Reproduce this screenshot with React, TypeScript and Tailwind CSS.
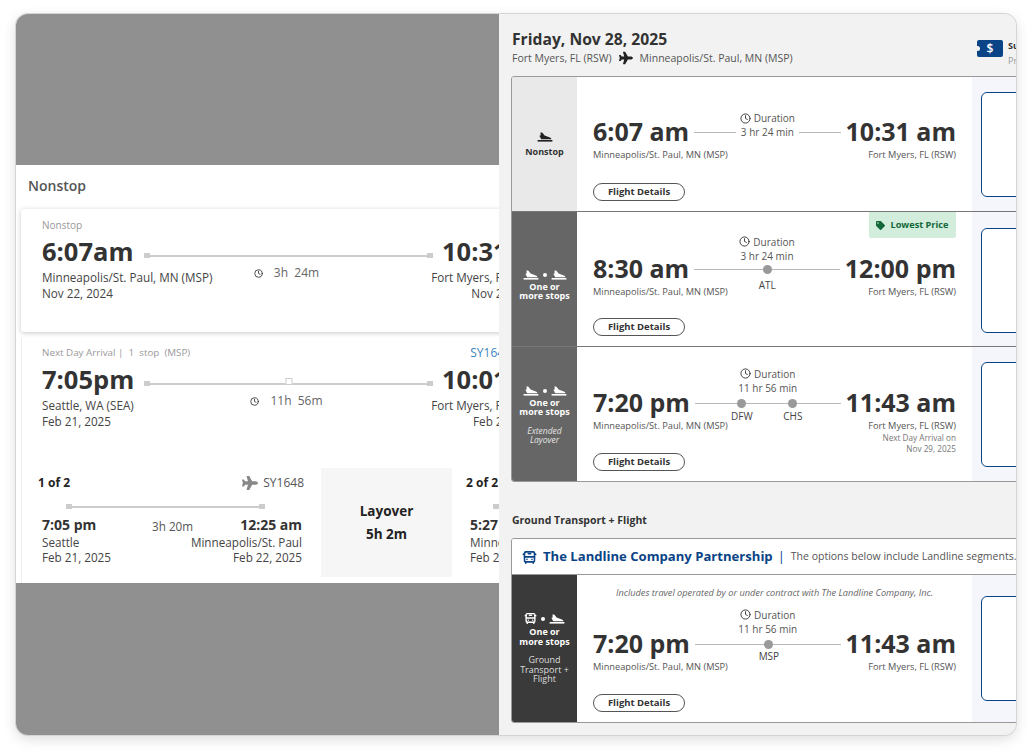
import { BusFront, Clock } from "lucide-react";
import { FaTag, FaPlane } from "react-icons/fa";

const navy = "#0a4386";

type Stop = { code: string; x: number; gap: number };

function LandIcon({ className }: { className?: string }) {
  return (
    <svg viewBox="0 0 16 10" fill="currentColor" className={className}>
      <path d="M3.6 0.3 L5.4 0.8 L7.6 3.6 L12.2 5.2 C14 5.9 14.6 6.6 14.2 7.2 L4.2 7.2 L2.4 3.8 L3.6 3.6 Z" />
      <rect x="0.6" y="8" width="14.8" height="1.6" />
    </svg>
  );
}

function StopIcons({ bus }: { bus?: boolean }) {
  return (
    <div className="flex items-center justify-center gap-[4px] text-white">
      {bus ? <BusFront className="h-[13px] w-[13px]" strokeWidth={2.5} /> : <LandIcon className="h-[10px] w-[16px]" />}
      <span className="h-[4px] w-[4px] rounded-full bg-white" />
      <LandIcon className="h-[10px] w-[16px]" />
    </div>
  );
}

function Route({ stops }: { stops: Stop[] }) {
  return (
    <div className="relative mx-[5px] h-[1px] flex-1 bg-[#b8b8b8]">
      {stops.map((s) => (
        <div
          key={s.code}
          className="absolute top-[-4px] flex w-[40px] flex-col items-center"
          style={{ left: s.x - 20 }}
        >
          <span className="h-[9px] w-[9px] shrink-0 rounded-full bg-[#999999]" />
          <span className="text-[10px] font-normal leading-[12px] text-[#444444]" style={{ marginTop: s.gap }}>
            {s.code}
          </span>
        </div>
      ))}
    </div>
  );
}

function Row({
  top,
  from,
  to,
  duration,
  stops = [],
  nextDay,
  note,
  lowest,
  durationClass = "bottom-[9px]",
  className = "",
  children,
}: {
  top: number;
  from: string;
  to: string;
  duration: string;
  stops?: Stop[];
  nextDay?: boolean;
  note?: boolean;
  lowest?: boolean;
  durationClass?: string;
  className?: string;
  children: React.ReactNode;
}) {
  return (
    <div className={`flex ${className}`}>
      {children}
      <div className="relative flex w-[395px] shrink-0 flex-col bg-white px-[16px] pb-[10px]" style={{ paddingTop: top }}>
        {note && (
          <div className="absolute left-0 right-0 top-[11px] text-center text-[9.2px] italic leading-[14px] text-[#666666]">
            Includes travel operated by or under contract with The Landline Company, Inc.
          </div>
        )}
        {lowest && (
          <div className="absolute right-[16px] top-0 flex h-[26px] w-[87px] items-center justify-center gap-[5px] rounded-b-[2px] bg-[#d3eddc] text-[9.2px] font-bold text-[#12683a]">
            <FaTag className="h-[9px] w-[9px]" />
            Lowest Price
          </div>
        )}
        <div className="flex h-[30px] items-center text-[25px] font-bold leading-[30px] text-[#333333]">
          <span className="whitespace-nowrap pb-[2px]">{from}</span>
          {stops.length > 0 ? (
            <div className="relative flex flex-1 items-center">
              <div className={`absolute left-0 right-0 flex flex-col items-center text-[10px] font-normal leading-[14px] text-[#555555] ${durationClass}`}>
                <div className="flex items-center gap-[3px]">
                  <Clock className="h-[11px] w-[11px] text-[#333333]" strokeWidth={2} />
                  <span>Duration</span>
                </div>
                <span>{duration}</span>
              </div>
              <Route stops={stops} />
            </div>
          ) : (
            <div className="relative mx-[5px] flex flex-1 items-center gap-[5px]">
              <div className="h-[1px] flex-1 bg-[#b8b8b8]" />
              <span className="text-[10px] font-normal leading-[14px] text-[#555555]">{duration}</span>
              <div className="h-[1px] flex-1 bg-[#b8b8b8]" />
              <div className="absolute bottom-full left-0 right-0 flex items-center justify-center gap-[3px] text-[10px] font-normal leading-[14px] text-[#555555]">
                <Clock className="h-[11px] w-[11px] text-[#333333]" strokeWidth={2} />
                Duration
              </div>
            </div>
          )}
          <span className="whitespace-nowrap pb-[2px]">{to}</span>
        </div>
        <div className="relative mt-[1px] flex justify-between text-[9.25px] leading-[14px] text-[#555555]">
          <span>Minneapolis/St. Paul, MN (MSP)</span>
          <span>Fort Myers, FL (RSW)</span>
          {nextDay && (
            <div className="absolute right-0 top-[14px] text-right text-[8.2px] leading-[10.5px] text-[#777777]">
              Next Day Arrival on
              <br />
              Nov 29, 2025
            </div>
          )}
        </div>
        <button className="mt-auto flex h-[18px] w-[92px] items-center justify-center rounded-full border border-[#555555] bg-white text-[9.5px] font-bold text-[#333333]">
          Flight Details
        </button>
      </div>
      <div className={`flex flex-1 items-center bg-[#f4f6fb] pl-[9px] ${lowest ? "pt-[3px]" : ""}`}>
        <div className="h-[105px] w-[80px] rounded-[6px] border-[1.5px] bg-white" style={{ borderColor: navy }} />
      </div>
    </div>
  );
}

function Side({ tone, children }: { tone: string; children: React.ReactNode }) {
  return (
    <div className={`flex w-[65px] shrink-0 flex-col items-center justify-center text-center ${tone}`}>{children}</div>
  );
}

function Rail() {
  return (
    <div className="flex items-center">
      <span className="h-[5px] w-[6px] bg-[#cccccc]" />
      <div className="h-[2px] flex-1 bg-[#cccccc]" />
      <span className="h-[5px] w-[6px] bg-[#cccccc]" />
    </div>
  );
}

function FareTimes({ time, mid, arrive, midStop }: { time: string; mid: string; arrive: string; midStop?: boolean }) {
  return (
    <div className="flex pt-[4px]">
      <div className="w-[102px] shrink-0 text-[25.5px] font-bold leading-[30px] text-[#333333]">{time}</div>
      <div className="relative mt-[17px] flex-1">
        <div className="relative">
          <Rail />
          {midStop && (
            <span className="absolute left-1/2 top-[-3px] h-[7px] w-[7px] -translate-x-1/2 border border-[#cccccc] bg-white" />
          )}
        </div>
        <div className="mt-[7px] flex items-center justify-center gap-[11px] pr-[4px] text-[12px] leading-[16px] text-[#666666]">
          <Clock className="h-[9px] w-[9px] text-[#444444]" strokeWidth={2.5} />
          <span className="whitespace-pre">{mid}</span>
        </div>
      </div>
      <div className="ml-[9px] w-[100px] shrink-0 whitespace-nowrap text-[25.5px] font-bold leading-[30px] text-[#333333]">{arrive}</div>
    </div>
  );
}

function FarePlaces({ from, fromDate, toDate }: { from: string; fromDate: string; toDate: string }) {
  return (
    <div className="-mt-[12px] flex justify-between text-[11.7px] leading-[16px] text-[#444444]">
      <div>
        {from}
        <br />
        {fromDate}
      </div>
      <div className="text-right">
        Fort Myers, FL (RSW)
        <br />
        {toDate}
      </div>
    </div>
  );
}

function StopsLabel() {
  return (
    <div className="mt-[2px] text-[9px] font-bold leading-[9.5px]">
      One or
      <br />
      more stops
    </div>
  );
}

export default function App() {
  return (
    <div className="h-[753px] w-[1032px] overflow-hidden bg-white pl-[16px] pt-[14px] font-['Open_Sans',sans-serif]">
      <div className="flex h-[721px] w-[1000px] overflow-hidden rounded-[12px] shadow-[0_0_0_1px_#d4d4d4,0_4px_14px_rgba(0,0,0,0.14)]">
        {/* background page behind the drawer */}
        <div className="flex w-[483px] shrink-0 flex-col overflow-hidden bg-[#909090]">
          <div className="h-[151px] shrink-0" />
          <div className="h-[418px] w-[600px] shrink-0 bg-white">
            <div className="flex h-[44px] items-center pb-[4px] pl-[12px] text-[14px] font-semibold text-[#555555]">Nonstop</div>
            <div className="ml-[5px] h-[123px] w-[570px] rounded-[3px] bg-white pl-[21px] pt-[9px] shadow-[0_1px_5px_rgba(0,0,0,0.22)]">
              <div className="text-[10px] leading-[14px] text-[#999999]">Nonstop</div>
              <div className="w-[500px]">
                <FareTimes time="6:07am" mid="3h  24m" arrive="10:31am" />
                <FarePlaces from="Minneapolis/St. Paul, MN (MSP)" fromDate="Nov 22, 2024" toDate="Nov 22, 2024" />
              </div>
            </div>
            <div className="ml-[5px] mt-[6px] h-[245px] w-[570px] border-l border-[#eeeeee] bg-white pl-[20px] pt-[8px]">
              <div className="flex w-[500px] justify-between text-[9.8px] leading-[14px] text-[#999999]">
                <span className="whitespace-pre">Next Day Arrival |  1  stop  (MSP)</span>
                <span className="mr-[31px] text-[12px] text-[#3b86bd]">SY1648</span>
              </div>
              <div className="w-[500px]">
                <FareTimes time="7:05pm" mid="11h  56m" arrive="10:01am" midStop />
                <FarePlaces from="Seattle, WA (SEA)" fromDate="Feb 21, 2025" toDate="Feb 22, 2025" />
              </div>
              <div className="-ml-[4px] mt-[39px] flex">
                <div className="w-[266px] shrink-0 pt-[7px]">
                  <div className="flex items-center justify-between text-[12px] leading-[16px]">
                    <span className="font-bold text-[#222222]">1 of 2</span>
                    <span className="flex items-center gap-[5px] text-[#555555]">
                      <FaPlane className="h-[16px] w-[16px] text-[#888888]" />
                      SY1648
                    </span>
                  </div>
                  <div className="ml-[28px] mr-[39px] mt-[13px]">
                    <Rail />
                  </div>
                  <div className="ml-[4px] mt-[7px] flex items-start text-[11.7px] leading-[15px] text-[#444444]">
                    <div className="w-[110px] shrink-0">
                      <div className="mb-[1px] text-[14px] font-bold leading-[18px] text-[#333333]">7:05 pm</div>
                      Seattle
                      <br />
                      Feb 21, 2025
                    </div>
                    <span className="mt-[3px] whitespace-nowrap text-[#555555]">3h 20m</span>
                    <div className="relative ml-auto mr-[2px] text-right">
                      <div className="mb-[1px] whitespace-nowrap text-[14px] font-bold leading-[18px] text-[#333333]">12:25 am</div>
                      <div className="absolute right-0 whitespace-nowrap">Minneapolis/St. Paul</div>
                      <br />
                      Feb 22, 2025
                    </div>
                  </div>
                </div>
                <div className="ml-[17px] flex h-[109px] w-[131px] shrink-0 flex-col items-center justify-center gap-[7px] bg-[#f6f6f6] text-[13.5px] font-bold leading-[16px] text-[#222222]">
                  <span>Layover</span>
                  <span>5h 2m</span>
                </div>
                <div className="ml-[14px] pt-[7px] text-[12px] leading-[16px]">
                  <div className="font-bold text-[#222222]">2 of 2</div>
                  <div className="ml-[27px] mt-[13px] w-[60px]">
                    <Rail />
                  </div>
                  <div className="ml-[4px] mt-[7px] text-[11.7px] leading-[15px] text-[#444444]">
                    <div className="mb-[1px] text-[14px] font-bold leading-[18px] text-[#333333]">5:27 am</div>
                    Minneapolis
                    <br />
                    Feb 22, 2025
                  </div>
                </div>
              </div>
            </div>
          </div>
        </div>

        {/* drawer */}
        <div className="flex min-w-0 flex-1 flex-col overflow-hidden bg-[#f2f2f2] pl-[12px]">
          <div className="flex h-[62px] w-[600px] shrink-0 justify-between pl-[1px] pt-[14px]">
            <div>
              <div className="text-[15.7px] font-bold leading-[22px] text-[#333333]">Friday, Nov 28, 2025</div>
              <div className="flex items-center gap-[7px] text-[10.5px] leading-[16px] text-[#555555]">
                <span>Fort Myers, FL (RSW)</span>
                <FaPlane className="h-[14px] w-[14px] text-[#222222]" />
                <span>Minneapolis/St. Paul, MN (MSP)</span>
              </div>
            </div>
            <div className="mr-[94px] mt-[12px] flex w-[40px] shrink-0 items-start gap-[5px]">
              <div className="relative flex h-[17px] w-[26px] shrink-0 items-center justify-center rounded-[2px] text-[12px] font-semibold text-white" style={{ backgroundColor: navy }}>
                $
                <span className="absolute left-[-2px] top-[6px] h-[5px] w-[5px] rounded-full bg-[#f2f2f2]" />
              </div>
              <div className="-mt-[2px] text-[9px] leading-[15px]">
                <div className="font-bold text-[#333333]">Su</div>
                <div className="text-[#999999]">Pr</div>
              </div>
            </div>
          </div>

          <div className="flex h-[406px] w-[560px] shrink-0 flex-col overflow-hidden rounded-[3px] border border-[#999999]">
            <Row top={40} from="6:07 am" to="10:31 am" duration="3 hr 24 min" className="h-[134px]">
              <Side tone="bg-[#e9e9e9] text-[#333333]">
                <LandIcon className="h-[10px] w-[16px] text-[#222222]" />
                <div className="mt-[5px] text-[9px] font-bold leading-[10px]">Nonstop</div>
              </Side>
            </Row>
            <Row
              top={42}
              from="8:30 am"
              to="12:00 pm"
              duration="3 hr 24 min"
              stops={[{ code: "ATL", x: 73, gap: 5 }]}
              lowest
              durationClass="bottom-[7px]"
              className="h-[135px] border-t border-[#777777]"
            >
              <Side tone="bg-[#666666] pt-[12px] text-white">
                <StopIcons />
                <StopsLabel />
              </Side>
            </Row>
            <Row
              top={41}
              from="7:20 pm"
              to="11:43 am"
              duration="11 hr 56 min"
              stops={[
                { code: "DFW", x: 47, gap: 2 },
                { code: "CHS", x: 98, gap: 2 },
              ]}
              nextDay
              className="h-[135px] border-t border-[#777777]"
            >
              <Side tone="bg-[#666666] pt-[2px] text-white">
                <StopIcons />
                <StopsLabel />
                <div className="mt-[9px] text-[8.5px] italic leading-[9.5px] text-[#e4e4e4]">
                  Extended
                  <br />
                  Layover
                </div>
              </Side>
            </Row>
          </div>

          <div className="flex h-[56px] shrink-0 items-start pl-[1px] pt-[31px] text-[10.5px] font-bold leading-[14px] text-[#333333]">
            Ground Transport + Flight
          </div>

          <div className="flex h-[185px] w-[560px] shrink-0 flex-col overflow-hidden rounded-[3px] border border-[#999999]">
            <div className="flex h-[36px] shrink-0 items-center whitespace-nowrap border-b border-[#999999] bg-white pl-[10px] pt-[1px] text-[#0a4386]">
              <BusFront className="h-[15px] w-[15px]" strokeWidth={2.5} />
              <span className="ml-[6px] text-[13.1px] font-bold">The Landline Company Partnership</span>
              <span className="ml-[5px] text-[13px]">|</span>
              <span className="ml-[6px] text-[10.5px] text-[#555555]">The options below include Landline segments.</span>
            </div>
            <Row
              top={54}
              from="7:20 pm"
              to="11:43 am"
              duration="11 hr 56 min"
              stops={[{ code: "MSP", x: 74, gap: 1 }]}
              note
              className="flex-1"
            >
              <Side tone="bg-[#3a3a3a] pb-[1px] text-white">
                <StopIcons bus />
                <StopsLabel />
                <div className="mt-[9px] text-[9px] leading-[9.5px] text-[#dddddd]">
                  Ground
                  <br />
                  Transport +
                  <br />
                  Flight
                </div>
              </Side>
            </Row>
          </div>
        </div>
      </div>
    </div>
  );
}
